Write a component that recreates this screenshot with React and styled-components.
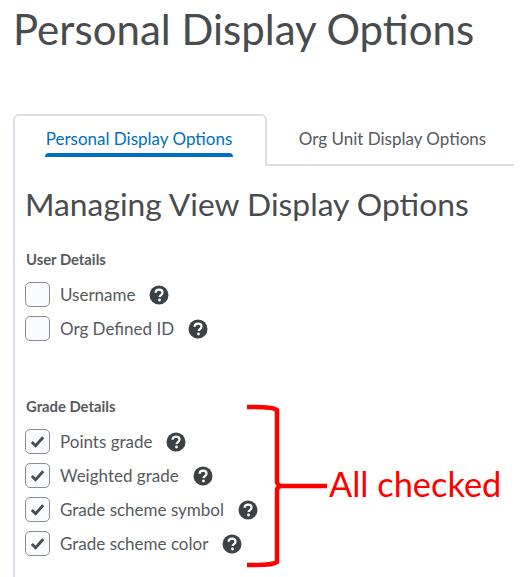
import React from "react";
import styled, { createGlobalStyle } from "styled-components";

const GlobalStyle = createGlobalStyle`
  html, body {
    margin: 0;
    padding: 0;
    background: #fff;
    font-family: Lato, "Open Sans", sans-serif;
    color: #494c4e;
  }
`;

const Page = styled.div`
  position: relative;
  width: 524px;
  height: 577px;
  overflow: hidden;
  padding-left: 13px;
  box-sizing: border-box;
`;

const Title = styled.h1`
  margin: 0;
  height: 114px;
  font-size: 42px;
  line-height: 58px;
  font-weight: 400;
  color: #494c4e;
`;

const Tabs = styled.div`
  display: flex;
  width: 501px;
  height: 52px;
  box-sizing: border-box;
  border-bottom: 2px solid #d9dfe5;
`;

const Tab = styled.div`
  box-sizing: border-box;
  flex: none;
  width: ${(p) => p.$width}px;
  height: ${(p) => (p.$active ? 52 : 50)}px;
  padding-top: ${(p) => (p.$active ? 13 : 15)}px;
  padding-right: ${(p) => (p.$active ? 2 : 0)}px;
  text-align: center;
  font-size: 17px;
  line-height: 20px;
  color: ${(p) => (p.$active ? "#006fbf" : "#565a5c")};
  ${(p) =>
    p.$active &&
    `
    background: #fff;
    border: 2px solid #d9dfe5;
    border-bottom: 0;
    border-radius: 6px 6px 0 0;
  `}
`;

const TabLabel = styled.span`
  position: relative;
  display: inline-block;

  &::after {
    content: "";
    display: ${(p) => (p.$active ? "block" : "none")};
    position: absolute;
    left: -1px;
    right: -1px;
    top: 24px;
    height: 4px;
    border-radius: 4px 4px 0 0;
    background: #006fbf;
  }
`;

const Panel = styled.div`
  border-left: 2px solid #d9dfe5;
  height: 412px;
  box-sizing: border-box;
  padding: 0 0 0 10px;
`;

const Heading = styled.h2`
  margin: 0;
  padding-top: 18px;
  height: 84px;
  box-sizing: border-box;
  font-size: 31.8px;
  line-height: 40px;
  font-weight: 400;
  color: #494c4e;
`;

const Section = styled.section`
  height: ${(p) => p.$height}px;
`;

const SectionTitle = styled.div`
  font-size: 14.8px;
  font-weight: 700;
  line-height: 18px;
  height: 31px;
  margin-left: 1px;
  color: #565a5c;
`;

const Row = styled.label`
  display: flex;
  align-items: center;
  height: 26px;
  margin-bottom: 8.3px;
`;

const Box = styled.span`
  box-sizing: border-box;
  flex: none;
  display: flex;
  align-items: center;
  justify-content: center;
  width: 25px;
  height: 25px;
  border: 1.5px solid #8a8d90;
  border-radius: 5px;
  background: #f9fbff;
  margin-right: 10px;
`;

const Label = styled.span`
  font-size: 17px;
  line-height: 20px;
  color: #565a5c;
  margin-top: 1px;
`;

const Help = styled.svg`
  flex: none;
  width: 20px;
  height: 20px;
  margin-left: ${(p) => p.$gap}px;
  margin-top: 1px;
`;

const Bracket = styled.svg`
  position: absolute;
  left: 245px;
  top: 402px;
  width: 90px;
  height: 170px;
`;

const Note = styled.div`
  position: absolute;
  left: 329px;
  top: 463px;
  font-family: Lato, sans-serif;
  font-size: 34.4px;
  line-height: 42px;
  color: #f00;
  white-space: nowrap;
`;

function HelpIcon({ gap }) {
  return (
    <Help $gap={gap} viewBox="0 0 20 20">
      <circle cx="10" cy="10" r="9.5" fill="#3e4143" />
      <path
        d="M6.6 7.8c.1-2 1.6-3.1 3.5-3.1 2 0 3.4 1.2 3.4 2.9 0 1.4-.8 2.1-1.8 2.8-.7.5-1.1.9-1.1 1.6"
        fill="none"
        stroke="#fff"
        strokeWidth="2.2"
      />
      <circle cx="10.5" cy="15" r="1.4" fill="#fff" />
    </Help>
  );
}

function Check() {
  return (
    <svg width="15" height="13" viewBox="0 0 15 13">
      <path d="M1.8 7l3.8 3.8L13.2 2.2" fill="none" stroke="#494c4e" strokeWidth="2.8" />
    </svg>
  );
}

function Option({ label, gap, checked }) {
  return (
    <Row>
      <Box>{checked && <Check />}</Box>
      <Label>{label}</Label>
      <HelpIcon gap={gap} />
    </Row>
  );
}

export default function App() {
  return (
    <Page>
      <GlobalStyle />
      <Title>Personal Display Options</Title>
      <Tabs>
        <Tab $active $width={254}>
          <TabLabel $active>Personal Display Options</TabLabel>
        </Tab>
        <Tab $width={251}>
          <TabLabel>Org Unit Display Options</TabLabel>
        </Tab>
      </Tabs>
      <Panel>
        <Heading>Managing View Display Options</Heading>
        <Section $height={147}>
          <SectionTitle>User Details</SectionTitle>
          <Option label="Username" gap={13} />
          <Option label="Org Defined ID" gap={14} />
        </Section>
        <Section>
          <SectionTitle>Grade Details</SectionTitle>
          <Option checked label="Points grade" gap={13} />
          <Option checked label="Weighted grade" gap={14} />
          <Option checked label="Grade scheme symbol" gap={14} />
          <Option checked label="Grade scheme color" gap={14} />
        </Section>
      </Panel>
      <Bracket viewBox="0 0 90 170">
        <path
          d="M2 5c16 0 26 0 30 3v72c0 2 2 4 5 4M2 163c16 0 26 0 30-3V88c0-2 2-4 5-4h45"
          fill="none"
          stroke="#f00"
          strokeWidth="4.5"
        />
      </Bracket>
      <Note>All checked</Note>
    </Page>
  );
}
